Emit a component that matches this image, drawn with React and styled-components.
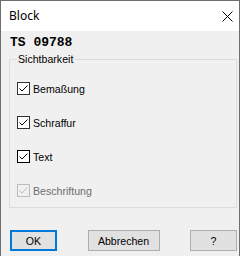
import React from "react";
import styled, { createGlobalStyle } from "styled-components";

const Global = createGlobalStyle`
  html, body { margin: 0; padding: 0; background: #ffffff; }
  * { box-sizing: border-box; }
`;

const Window = styled.div`
  width: 240px;
  height: 256px;
  border: 1px solid #6e6e6e;
  border-bottom: none;
  display: flex;
  flex-direction: column;
  background: #f0f0f0;
  font-family: "Liberation Sans", Arial, sans-serif;
`;

const TitleBar = styled.div`
  height: 30px;
  flex: none;
  background: #ffffff;
  display: flex;
  align-items: center;
  justify-content: space-between;
  padding: 0 6px 0 8px;
`;

const Title = styled.span`
  font-family: "Noto Sans", "Open Sans", sans-serif;
  font-size: 12px;
  color: #000;
  line-height: 16px;
  margin-top: -1px;
`;

const CloseButton = styled.button`
  width: 12px;
  height: 12px;
  padding: 0;
  border: none;
  background: transparent;
  display: flex;
  align-items: center;
  justify-content: center;
`;

const Body = styled.div`
  flex: 1;
  display: flex;
  flex-direction: column;
  padding: 4px 2px 0 8px;
`;

const Code = styled.div`
  font-family: "Liberation Mono", "Courier New", monospace;
  font-weight: bold;
  font-size: 13px;
  line-height: 15px;
  color: #000;
  margin-left: 1px;
`;

const Group = styled.fieldset`
  margin: 3px 0 0 0;
  padding: 16px 7px 10px 7px;
  border: 1px solid #dcdcdc;
  display: flex;
  flex-direction: column;
  gap: 21px;
  min-width: 0;
`;

const Legend = styled.legend`
  font-size: 10.6px;
  line-height: 13px;
  padding: 0 2px 0 1px;
  color: #000;
`;

const Row = styled.label`
  display: flex;
  align-items: center;
  height: 13px;
  gap: 3px;
  font-size: 10.6px;
  color: ${(p) => (p.$disabled ? "#6d6d6d" : "#000")};
`;

const Box = styled.span`
  width: 13px;
  height: 13px;
  flex: none;
  border: 1px solid ${(p) => p.$border};
  background: ${(p) => (p.$disabled ? "#f0f0f0" : "#ffffff")};
  display: flex;
  align-items: center;
  justify-content: center;
`;

const Buttons = styled.div`
  margin-top: 22px;
  margin-left: 1px;
  display: flex;
  justify-content: space-between;
`;

const Button = styled.button`
  height: 21px;
  width: ${(p) => p.$w}px;
  padding: 0;
  background: #e1e1e1;
  border: ${(p) => (p.$primary ? "2px solid #0078d7" : "1px solid #adadad")};
  font-family: "Liberation Sans", Arial, sans-serif;
  font-size: 10.6px;
  color: #000;
  display: flex;
  align-items: center;
  justify-content: center;
`;

function Check({ label, border = "#333333", disabled }) {
  const c = disabled ? "#bcbcbc" : "#000";
  return (
    <Row $disabled={disabled}>
      <Box $border={disabled ? "#bcbcbc" : border} $disabled={disabled}>
        <svg width="11" height="11" viewBox="0 0 11 11">
          <path d="M1.5 5.5 L4 8 L9.5 2.5" fill="none" stroke={c} strokeWidth="1" />
        </svg>
      </Box>
      {label}
    </Row>
  );
}

export default function App() {
  return (
    <>
      <Global />
      <Window>
        <TitleBar>
          <Title>Block</Title>
          <CloseButton aria-label="Schließen">
            <svg width="11" height="11" viewBox="0 0 11 11">
              <path d="M0.5 0.5 L10.5 10.5 M10.5 0.5 L0.5 10.5" stroke="#000" strokeWidth="1" fill="none" />
            </svg>
          </CloseButton>
        </TitleBar>
        <Body>
          <Code>TS 09788</Code>
          <Group>
            <Legend>Sichtbarkeit</Legend>
            <Check label="Bemaßung" />
            <Check label="Schraffur" />
            <Check label="Text" border="#000000" />
            <Check label="Beschriftung" disabled />
          </Group>
          <Buttons>
            <Button $w={47} $primary>OK</Button>
            <Button $w={72}>Abbrechen</Button>
            <Button $w={47}>?</Button>
          </Buttons>
        </Body>
      </Window>
    </>
  );
}
